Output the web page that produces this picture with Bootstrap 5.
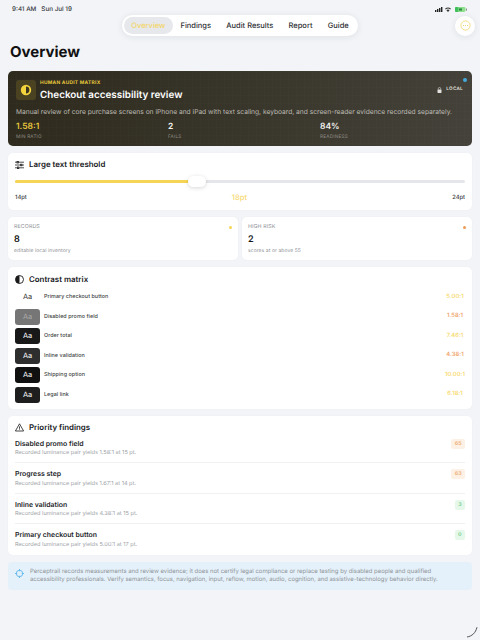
<!DOCTYPE html>
<html lang="en">
<head>
<meta charset="utf-8">
<title>Overview</title>
<link rel="stylesheet" href="https://cdn.jsdelivr.net/npm/bootstrap@5.3.0/dist/css/bootstrap.min.css">
<style>
html,body{height:100%}
body{font-family:Inter,"Liberation Sans",sans-serif;background:#f2f4f7;color:#15171a;overflow:hidden;width:480px;height:640px;position:relative;text-rendering:geometricPrecision}
.pg{padding:0 8px}
.stat-bar{height:15px;padding:3px 4px 0;font-size:6.3px;font-weight:500;color:#33363a;line-height:12px}
.stat-bar .when{gap:5px}
.top-row{display:grid;grid-template-columns:1fr auto 1fr;align-items:center;height:21px}
.tabs{background:#fff;border-radius:11px;padding:2px;box-shadow:0 1px 7px rgba(20,30,50,.09);height:21px;align-items:stretch}
.tab-i{font-size:7.5px;font-weight:500;color:#2b2d31;padding:0 7.6px;line-height:17px;border-radius:9px;white-space:nowrap}
.tab-i.on{background:#e6e8eb;color:#f4d668}
.more-b{justify-self:end;width:20px;height:20px;border-radius:50%;background:#fff;box-shadow:0 1px 7px rgba(20,30,50,.09);margin-right:-3px}
.page-h{font-size:15px;font-weight:700;line-height:21px;margin:5px 0 0 2px;color:#111}
.hero{margin-top:9px;height:75px;border-radius:5px;padding:9px 8px 0;color:#fff;position:relative;
 background-color:#3a362c;
 background-image:linear-gradient(rgba(255,255,255,.012) 1px,transparent 1px),linear-gradient(90deg,rgba(255,255,255,.012) 1px,transparent 1px),linear-gradient(100deg,#2e2a1d 0%,#38352a 50%,#45423b 100%);
 background-size:8px 8px,8px 8px,100% 100%}
.hero-ic{width:20px;height:20px;border-radius:3px;background:#4a4221;flex:none}
.eyebrow{font-size:4.9px;font-weight:700;color:#e8c83c;letter-spacing:.25px;line-height:7px}
.hero-t{font-size:9.9px;font-weight:600;line-height:13px;margin-top:1.5px}
.local{font-size:4.6px;font-weight:600;letter-spacing:.3px;color:#e2e1dd;gap:4px;margin-top:7px;margin-right:1px}
.dot-b{width:4px;height:4px;border-radius:50%;background:#45a9dc;top:7px;right:5px}
.hero-p{font-size:6.66px;line-height:10px;color:#bdbbb3;margin:5px 0 0;white-space:nowrap}
.m-row{display:grid;grid-template-columns:152px 152px 1fr;margin-top:5px}
.m-v{font-size:8.5px;font-weight:600;line-height:10px;color:#f3f2ee}
.m-v.y{color:#e8c83c}
.m-l{font-size:4.7px;letter-spacing:.2px;color:#8d8b83;line-height:8px;margin-top:1px}
.box{background:#fff;border:0;border-radius:5px;box-shadow:0 0 2px rgba(30,40,60,.04)}
.sld{margin-top:7px;height:57px;padding:6px 7px 0}
.h-t{font-size:7.9px;font-weight:600;line-height:11px;gap:5px;color:#17191c}
.track{height:3px;background:#e4e6e9;border-radius:2px;margin-top:10px;position:relative}
.track-f{height:3px;background:#f6d555;border-radius:2px 0 0 2px}
.thumb{position:absolute;top:-4px;width:18px;height:11px;border-radius:6px;background:#fff;box-shadow:0 1px 4px rgba(0,0,0,.16)}
.sc{font-size:5.8px;line-height:8px;font-weight:500;color:#3a3c40;margin-top:11px}
.sc .v{font-size:7.6px;color:#f8da72}
.stats{display:grid;grid-template-columns:230px 230px;gap:4px;margin-top:7px}
.st{height:43px;padding:7px 6px 0;position:relative}
.st-l{font-size:5.3px;line-height:7px;color:#8c8f94;letter-spacing:.1px}
.st-v{font-size:9px;font-weight:600;line-height:12px;margin-top:2.5px;color:#15171a}
.st-s{font-size:5px;line-height:7px;color:#8f9297;margin-top:2px;letter-spacing:.08px}
.pip{width:3px;height:3px;border-radius:50%;top:9px;right:6.5px}
.mx{margin-top:7px;height:142px;padding:7px 7px 0}
.mx-rows{margin-top:2.5px}
.mr{height:19.5px;gap:4px}
.swa{width:25px;height:16px;border-radius:3px;font-size:7.4px;line-height:16px;text-align:center;flex:none;color:#fff}
.mr-n{font-size:5.4px;font-weight:500;color:#3d3f43;letter-spacing:.04px}
.mr-r{margin-left:auto;font-size:5.8px;font-weight:600;min-width:20px;text-align:center;letter-spacing:.05px}
.pf{margin-top:7px;height:139px;padding:6px 7px 0}
.pf-i{height:30.5px;border-bottom:1px solid #eef0f2;padding-top:6px}
.pf-i:first-child{height:24.5px;padding-top:0}
.pf-i:last-child{border-bottom:0}
.pf-n{font-size:6.9px;font-weight:600;line-height:9px;color:#24262a}
.pf-d{font-size:5.6px;line-height:7px;color:#a0a3a8;margin-top:2.7px}
.sco{font-size:5.2px;font-weight:700;height:10px;line-height:10px;padding:0 3.5px;border-radius:2px;min-width:10px;text-align:center}
.sco.o{background:#fdf0e4;color:#eeb27c}
.sco.g{background:#e6f8ea;color:#7ed196}
.pf-list{margin-top:5.5px}
.nt{margin-top:7px;height:28px;background:#e5f1fa;border-radius:4px;padding:5.5px 7px 0;gap:6px;font-size:5.95px;line-height:8.6px;color:#8f9499}
.nt svg{margin-top:1.5px}
.arc{position:absolute;right:2px;bottom:2px;width:12px;height:12px}
</style>
</head>
<body>
<div class="pg">
  <div class="stat-bar d-flex justify-content-between align-items-center">
    <div class="when d-flex"><span>9:41 AM</span><span>Sun Jul 19</span></div>
    <svg width="33" height="7" viewBox="0 0 33 7">
      <rect x="0" y="4" width="1.4" height="2" fill="#222"/><rect x="2" y="3" width="1.4" height="3" fill="#222"/><rect x="4" y="2" width="1.4" height="4" fill="#222"/><rect x="6" y="1" width="1.4" height="5" fill="#222"/>
      <path d="M10 2.8a4.4 4.4 0 0 1 6 0l-.8.8a3.2 3.2 0 0 0-4.4 0zM11.4 4.2a2.4 2.4 0 0 1 3.2 0L13 6z" fill="#333"/>
      <rect x="20" y="1" width="10.5" height="5" rx="1.4" fill="#8ee08f"/><rect x="20" y="1" width="3.4" height="5" rx="1" fill="#3fbf5a"/><rect x="24" y="2.4" width="3" height="2.2" fill="#2f8c45"/><rect x="31" y="2.6" width="1" height="2" fill="#888"/>
    </svg>
  </div>
  <div class="top-row">
    <span></span>
    <nav class="tabs d-flex">
      <span class="tab-i on">Overview</span><span class="tab-i">Findings</span><span class="tab-i">Audit Results</span><span class="tab-i">Report</span><span class="tab-i">Guide</span>
    </nav>
    <div class="more-b d-flex align-items-center justify-content-center">
      <svg width="11" height="11" viewBox="0 0 11 11" fill="none"><circle cx="5.5" cy="5.5" r="4.6" stroke="#f2d46a" stroke-width=".8"/><circle cx="3.4" cy="5.5" r=".5" fill="#e8c850"/><circle cx="5.5" cy="5.5" r=".5" fill="#e8c850"/><circle cx="7.6" cy="5.5" r=".5" fill="#e8c850"/></svg>
    </div>
  </div>
  <h1 class="page-h">Overview</h1>

  <section class="hero">
    <span class="dot-b position-absolute"></span>
    <div class="d-flex gap-1">
      <div class="hero-ic d-flex align-items-center justify-content-center">
        <svg width="12" height="12" viewBox="0 0 12 12"><circle cx="6" cy="6" r="5.2" fill="#f3d43c"/><path d="M6 2.6a3.4 3.4 0 0 1 0 6.8z" fill="#3a3420"/></svg>
      </div>
      <div class="flex-grow-1">
        <div class="eyebrow">HUMAN AUDIT MATRIX</div>
        <div class="hero-t">Checkout accessibility review</div>
      </div>
      <div class="local d-flex align-items-start">
        <svg width="5" height="6" viewBox="0 0 5 6"><path d="M1.2 2.6V1.8a1.3 1.3 0 0 1 2.6 0v.8" fill="none" stroke="#e2e1dd" stroke-width=".6"/><rect x=".5" y="2.5" width="4" height="3.4" rx=".6" fill="#e2e1dd"/></svg>
        <span>LOCAL</span>
      </div>
    </div>
    <p class="hero-p">Manual review of core purchase screens on iPhone and iPad with text scaling, keyboard, and screen-reader evidence recorded separately.</p>
    <div class="m-row">
      <div><div class="m-v y">1.58:1</div><div class="m-l">MIN RATIO</div></div>
      <div><div class="m-v">2</div><div class="m-l">FAILS</div></div>
      <div><div class="m-v">84%</div><div class="m-l">READINESS</div></div>
    </div>
  </section>

  <section class="box sld">
    <div class="h-t d-flex align-items-center">
      <svg width="9" height="8" viewBox="0 0 9 8" fill="none" stroke="#222" stroke-width=".8"><path d="M0 1.2h9M0 4h9M0 6.8h9"/><rect x="2" y=".4" width="1.4" height="1.6" fill="#fff"/><rect x="5.6" y="3.2" width="1.4" height="1.6" fill="#fff"/><rect x="2.4" y="6" width="1.4" height="1.6" fill="#fff"/></svg>
      <span>Large text threshold</span>
    </div>
    <div class="track"><div class="track-f" style="width:40%"></div><span class="thumb" style="left:173px"></span></div>
    <div class="sc d-flex justify-content-between align-items-center"><span>14pt</span><span class="v">18pt</span><span>24pt</span></div>
  </section>

  <div class="stats">
    <div class="box st"><span class="pip position-absolute" style="background:#f6d555"></span><div class="st-l">RECORDS</div><div class="st-v">8</div><div class="st-s">editable local inventory</div></div>
    <div class="box st"><span class="pip position-absolute" style="background:#ee9a55"></span><div class="st-l">HIGH RISK</div><div class="st-v">2</div><div class="st-s">scores at or above 55</div></div>
  </div>

  <section class="box mx">
    <div class="h-t d-flex align-items-center">
      <svg width="9" height="9" viewBox="0 0 9 9"><circle cx="4.5" cy="4.5" r="4" fill="none" stroke="#1a1a1a" stroke-width=".9"/><path d="M4.5.5a4 4 0 0 0 0 8z" fill="#1a1a1a"/></svg>
      <span>Contrast matrix</span>
    </div>
    <div class="mx-rows">
      <div class="mr d-flex align-items-center"><span class="swa" style="background:#fff;color:#333">Aa</span><span class="mr-n">Primary checkout button</span><span class="mr-r" style="color:#f8da72">5.00:1</span></div>
      <div class="mr d-flex align-items-center"><span class="swa" style="background:#767676;color:#aaa">Aa</span><span class="mr-n">Disabled promo field</span><span class="mr-r" style="color:#f1a66f">1.58:1</span></div>
      <div class="mr d-flex align-items-center"><span class="swa" style="background:#181818">Aa</span><span class="mr-n">Order total</span><span class="mr-r" style="color:#f8da72">7.46:1</span></div>
      <div class="mr d-flex align-items-center"><span class="swa" style="background:#2e2e2e">Aa</span><span class="mr-n">Inline validation</span><span class="mr-r" style="color:#f1a66f">4.38:1</span></div>
      <div class="mr d-flex align-items-center"><span class="swa" style="background:#101010">Aa</span><span class="mr-n">Shipping option</span><span class="mr-r" style="color:#f8da72">10.00:1</span></div>
      <div class="mr d-flex align-items-center"><span class="swa" style="background:#1e1e1e">Aa</span><span class="mr-n">Legal link</span><span class="mr-r" style="color:#f8da72">6.18:1</span></div>
    </div>
  </section>

  <section class="box pf">
    <div class="h-t d-flex align-items-center">
      <svg width="9" height="9" viewBox="0 0 9 9" fill="none" stroke="#1a1a1a" stroke-width=".8" stroke-linejoin="round"><path d="M4.5 .8 8.6 8H.4z"/><path d="M4.5 3.4v2.4M4.5 6.4v.6"/></svg>
      <span>Priority findings</span>
    </div>
    <div class="pf-list">
      <div class="pf-i d-flex justify-content-between align-items-start"><div><div class="pf-n">Disabled promo field</div><div class="pf-d">Recorded luminance pair yields 1.58:1 at 15 pt.</div></div><span class="sco o">65</span></div>
      <div class="pf-i d-flex justify-content-between align-items-start"><div><div class="pf-n">Progress step</div><div class="pf-d">Recorded luminance pair yields 1.67:1 at 14 pt.</div></div><span class="sco o">63</span></div>
      <div class="pf-i d-flex justify-content-between align-items-start"><div><div class="pf-n">Inline validation</div><div class="pf-d">Recorded luminance pair yields 4.38:1 at 15 pt.</div></div><span class="sco g">3</span></div>
      <div class="pf-i d-flex justify-content-between align-items-start"><div><div class="pf-n">Primary checkout button</div><div class="pf-d">Recorded luminance pair yields 5.00:1 at 17 pt.</div></div><span class="sco g">0</span></div>
    </div>
  </section>

  <aside class="nt d-flex align-items-start">
    <svg width="9" height="9" viewBox="0 0 9 9" fill="none" stroke="#5fb8ee" stroke-width=".9" class="flex-shrink-0"><circle cx="4.5" cy="4.5" r="3.2"/><path d="M4.5 0v2.2M4.5 6.8V9M0 4.5h2.2M6.8 4.5H9"/></svg>
    <div>Perceptrail records measurements and review evidence; it does not certify legal compliance or replace testing by disabled people and qualified accessibility professionals. Verify semantics, focus, navigation, input, reflow, motion, audio, cognition, and assistive-technology behavior directly.</div>
  </aside>
</div>
<svg class="arc" viewBox="0 0 12 12" fill="none"><path d="M1 11C6 10.2 9.6 7 11 1.2" stroke="#555" stroke-width="1"/></svg>
<script src="https://cdn.jsdelivr.net/npm/bootstrap@5.3.0/dist/js/bootstrap.bundle.min.js"></script>
</body>
</html>
